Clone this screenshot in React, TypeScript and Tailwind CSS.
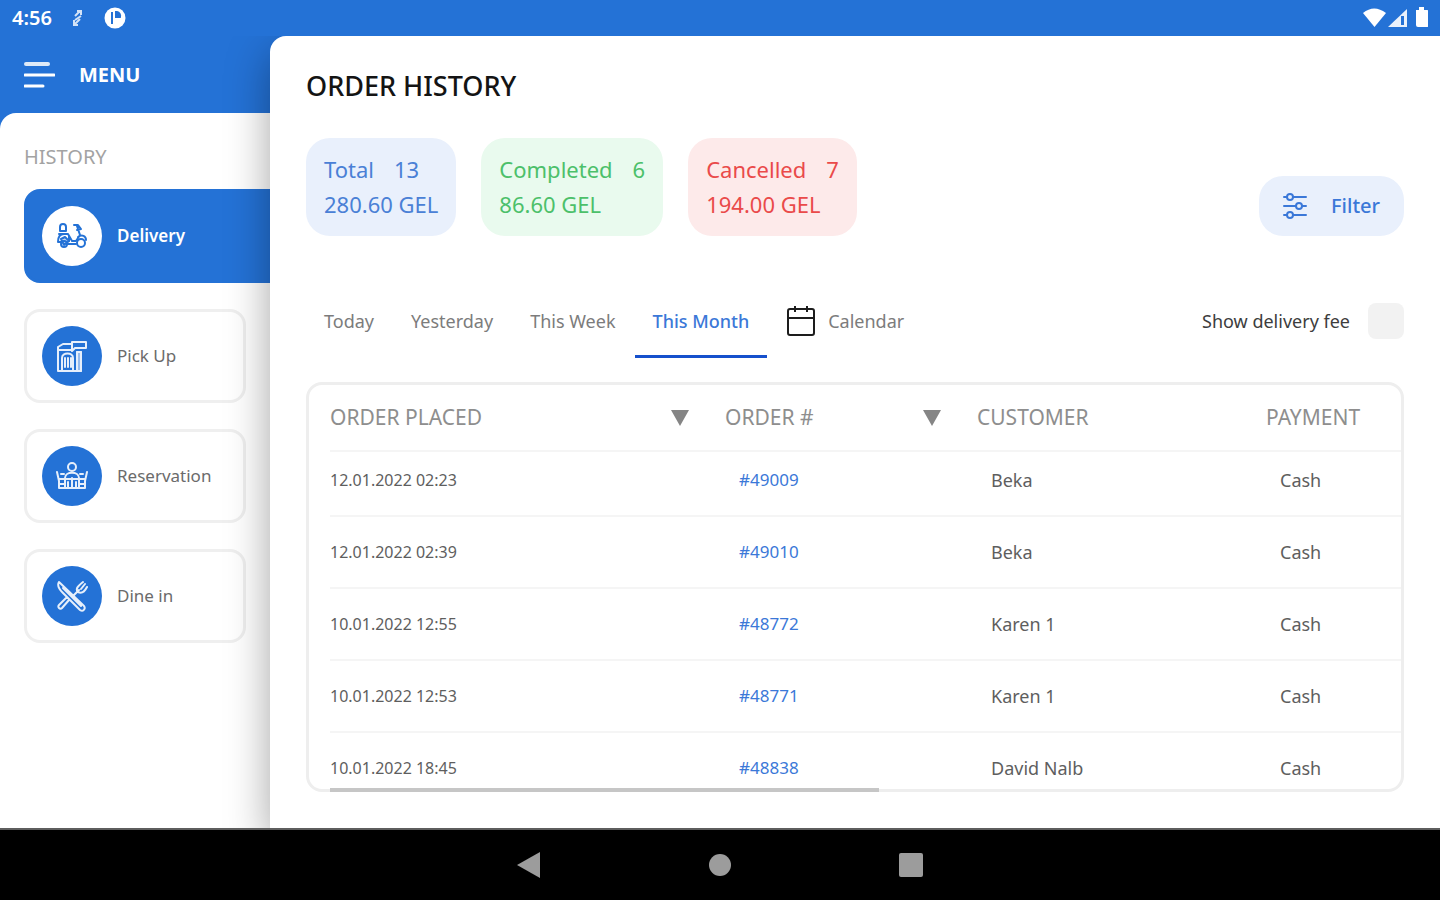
import { useState } from 'react';
import type { ReactNode } from 'react';
import clsx from 'clsx';

const orders = [
  { placed: '12.01.2022 02:23', id: '#49009', customer: 'Beka', payment: 'Cash' },
  { placed: '12.01.2022 02:39', id: '#49010', customer: 'Beka', payment: 'Cash' },
  { placed: '10.01.2022 12:55', id: '#48772', customer: 'Karen 1', payment: 'Cash' },
  { placed: '10.01.2022 12:53', id: '#48771', customer: 'Karen 1', payment: 'Cash' },
  { placed: '10.01.2022 18:45', id: '#48838', customer: 'David Nalb', payment: 'Cash' }
];

const totals = [
  { label: 'Total', count: 13, sum: '280.60 GEL', style: 'bg-[#e9f0fc] text-[#4a80d6]' },
  { label: 'Completed', count: 6, sum: '86.60 GEL', style: 'bg-[#e9faee] text-[#4cc06a]' },
  { label: 'Cancelled', count: 7, sum: '194.00 GEL', style: 'bg-[#fdeaea] text-[#ea4a4a]' }
];

const periods = ['Today', 'Yesterday', 'This Week', 'This Month'];

function Icon({ children }: { children: ReactNode }) {
  return (
    <svg width="32" height="32" viewBox="0 0 32 32" fill="none" stroke="currentColor" strokeWidth="2" strokeLinecap="round" strokeLinejoin="round" aria-hidden="true">
      {children}
    </svg>
  );
}

const sections = [
  {
    name: 'Delivery',
    icon: (
      <Icon>
        <path d="M4 11V7q0-3 3-3t3 3v4zM3 14h9l4 7h4l4-6-3-9M18 5h4l3 4-4 1M2 22c0-5 2-8 6-8M2 22h3M11 24h9M13 16v5M22 17c4-3 8-1 8 3" />
        <path d="M5 19l4-2 4 4-5 4z" fill="currentColor" fillOpacity="0.3" />
        <circle cx="8" cy="24" r="3" />
        <circle cx="25" cy="23" r="4" />
      </Icon>
    )
  },
  {
    name: 'Pick Up',
    icon: (
      <Icon>
        <path d="M2 7v24h23V12M2 7l5-3h9M2 10h14M16 2h14v6H19l-3 3zM6 31V18c0-6 11-6 11 0v13M9 18v9M12 18v9M15 18v9M21 12v19" />
        <path d="M21 12h4v19h-4z" fill="currentColor" fillOpacity="0.6" />
      </Icon>
    )
  },
  {
    name: 'Reservation',
    icon: (
      <Icon>
        <circle cx="16" cy="7" r="4" />
        <path d="M9 18c0-7 14-7 14 0v10H9zM1 12l2 9v7h26v-7l2-9M3 19h26M3 24h6M23 24h6M16 18v10M12 22v6M20 22v6M5 14h3M24 14h3" />
      </Icon>
    )
  },
  {
    name: 'Dine in',
    icon: (
      <Icon>
        <path d="M3 2c-2 3 0 7 4 11l17 17c3 2 6-1 4-4L3 2zM7 8l18 18M18 15l5-5M13 20L6 28c-2 2-5-1-3-3l8-8M22 12c-3-3 0-6 5-10M22 12c4 2 7-1 9-5M25 9l4-5" />
      </Icon>
    )
  }
];

function StatusBar() {
  return (
    <header className="relative z-10 flex h-9 shrink-0 items-center justify-between bg-[#2472d6] px-3 text-white">
      <div className="flex items-center gap-5">
        <span className="text-xl font-semibold">4:56</span>
        <svg width="12" height="18" viewBox="0 0 12 18" fill="none" stroke="currentColor" strokeWidth="2" aria-hidden="true">
          <path d="M3 7l5-5M5 2h4v4M9 7L3 11M8 10l-5 5M2 11v5h4" opacity="0.8" />
        </svg>
        <svg width="22" height="22" viewBox="0 0 22 22" aria-hidden="true">
          <circle cx="11" cy="11" r="10.5" fill="currentColor" />
          <path d="M8 17V5M12 5v5h4a4 4 0 0 0-3-5z" fill="#2472d6" stroke="#2472d6" strokeWidth="2" />
        </svg>
      </div>
      <svg width="66" height="22" viewBox="0 0 66 22" fill="currentColor" aria-hidden="true">
        <path d="M1 6Q12 -3 24 6L12.500 20z" />
        <path d="M26 20L45 2v18z" opacity="0.9" />
        <path d="M39 9h3v9h-3z" fill="#2472d6" />
        <path d="M54 3h3V0h5v3h3a2 2 0 0 1 2 2v13a2 2 0 0 1-2 2H56a2 2 0 0 1-2-2z" />
      </svg>
    </header>
  );
}

function Sidebar() {
  const [active, setActive] = useState('Delivery');

  return (
    <aside className="flex w-[270px] shrink-0 flex-col">
      <div className="flex h-[77px] shrink-0 items-center px-6">
        <button className="flex items-center gap-6 text-xl font-bold text-white">
          <svg width="31" height="28" viewBox="0 0 31 28" stroke="currentColor" strokeLinecap="round" aria-hidden="true">
            <path d="M2 3h22" strokeWidth="4" opacity="0.85" />
            <path d="M1 14h29M1 25h18" strokeWidth="3" />
          </svg>
          MENU
        </button>
      </div>
      <nav className="flex-1 rounded-tl-2xl bg-white px-6 pt-[30px]">
        <h2 className="text-xl text-[#a3a3a3]">HISTORY</h2>
        <ul className="mt-[18px] flex flex-col gap-[26px]">
          {sections.map(({ name, icon }) => (
            <li key={name} className={clsx(active === name && '-mr-6')}>
              <button
                onClick={() => setActive(name)}
                className={clsx(
                  'flex h-[94px] w-full items-center gap-[15px] border-3 px-[15px] text-[17px]',
                  active === name ? 'rounded-l-2xl border-[#2472d6] bg-[#2472d6] font-semibold text-white' : 'rounded-2xl border-[#efefef] text-[#6b6b6b]'
                )}
              >
                <span className={clsx('flex size-[60px] shrink-0 items-center justify-center rounded-full', active === name ? 'bg-white text-[#2472d6]' : 'bg-[#2472d6] text-[#e6effb]')}>{icon}</span>
                {name}
              </button>
            </li>
          ))}
        </ul>
      </nav>
    </aside>
  );
}

function SortArrow() {
  return (
    <svg width="18" height="16" viewBox="0 0 18 16" fill="#858585" aria-hidden="true">
      <path d="M0 0h18L9 16z" />
    </svg>
  );
}

function OrdersTable() {
  return (
    <div className="relative mt-6 min-h-0 flex-1">
      <div className="h-full overflow-hidden rounded-2xl border-3 border-[#eeeeee] pl-[21px]">
        <table className="w-full table-fixed text-left">
          <thead>
            <tr className="h-[66px] border-b-2 border-[#f5f5f5] text-[21px] text-[#8e8e8e]">
              <th className="w-[395px] pr-9 font-normal">
                <button className="flex w-full items-center justify-between">ORDER PLACED <SortArrow /></button>
              </th>
              <th className="w-[252px] pr-9 font-normal">
                <button className="flex w-full items-center justify-between">ORDER # <SortArrow /></button>
              </th>
              <th className="w-[289px] font-normal">CUSTOMER</th>
              <th className="font-normal">PAYMENT</th>
            </tr>
          </thead>
          <tbody>
            {orders.map((order, i) => (
              <tr key={order.id} className={clsx('border-b-2 border-[#f5f5f5] text-lg leading-6 text-[#5e5e5e]', i === 0 ? 'h-[65px] [&>td]:pb-2' : 'h-[72px]')}>
                <td className="text-base">{order.placed}</td>
                <td className="pl-[14px] text-[17px]"><a href={order.id} className="text-[#3b78d8]">{order.id}</a></td>
                <td className="pl-[14px]">{order.customer}</td>
                <td className="pl-[14px]">{order.payment}</td>
              </tr>
            ))}
          </tbody>
        </table>
      </div>
      <div className="absolute bottom-0 left-6 h-1 w-1/2 bg-[#c6c6c6]" />
    </div>
  );
}

function OrderHistory() {
  const [period, setPeriod] = useState('This Month');

  return (
    <main className="flex min-w-0 flex-1 flex-col rounded-tl-2xl bg-white px-9 pt-7 pb-9 shadow-[0_16px_44px_rgba(0,0,0,0.36)]">
      <h1 className="text-[27px] leading-11 font-medium text-[#141414]">ORDER HISTORY</h1>

      <div className="mt-[30px] flex items-end justify-between">
        <div className="flex gap-[25px]">
          {totals.map((item) => (
            <div key={item.label} className={clsx('rounded-3xl px-[18px] py-[14px] text-[22px] leading-[35px]', item.style)}>
              <p className="flex gap-5"><span>{item.label}</span><span>{item.count}</span></p>
              <p>{item.sum}</p>
            </div>
          ))}
        </div>
        <button className="flex h-[60px] items-center gap-6 rounded-3xl bg-[#e9f0fc] px-6 text-xl font-medium text-[#3b78d8]">
          <svg width="24" height="26" viewBox="0 0 24 26" fill="none" stroke="currentColor" strokeWidth="2" strokeLinecap="round" aria-hidden="true">
            <path d="M1 4h3M10 4h13M1 13h12M19 13h4M1 22h3M10 22h13" />
            <circle cx="7" cy="4" r="3" />
            <circle cx="16" cy="13" r="3" />
            <circle cx="7" cy="22" r="3" />
          </svg>
          Filter
        </button>
      </div>

      <div className="mt-[50px] flex items-start justify-between">
        <div className="flex gap-px text-lg text-[#7c7c7c]">
          {periods.map((name) => (
            <button
              key={name}
              onClick={() => setPeriod(name)}
              className={clsx('h-[72px] border-b-3 px-[18px]', period === name ? 'border-[#1650cc] font-medium text-[#3b78d8]' : 'border-transparent')}
            >
              {name}
            </button>
          ))}
          <button className="flex h-[72px] items-center gap-3 border-b-3 border-transparent px-[18px]">
            <svg width="30" height="32" viewBox="0 0 30 32" fill="none" stroke="#1d1d1d" strokeWidth="2" aria-hidden="true">
              <rect x="2" y="4" width="26" height="26" rx="2" />
              <path d="M2 13h26M9 1v6M21 1v6" />
            </svg>
            Calendar
          </button>
        </div>
        <label className="flex h-[72px] items-center gap-[18px] border-b-3 border-transparent text-lg text-[#3d3d3d]">
          Show delivery fee
          <input type="checkbox" className="size-9 appearance-none rounded-lg bg-[#f2f2f2] checked:bg-[#2472d6]" />
        </label>
      </div>

      <OrdersTable />
    </main>
  );
}

function NavigationBar() {
  return (
    <footer className="relative flex h-[72px] shrink-0 items-center justify-center gap-[168px] border-t-2 border-[#5e5e5e] bg-black text-[#9c9c9c]">
      <button aria-label="Back">
        <svg width="24" height="26" viewBox="0 0 24 26" fill="currentColor"><path d="M23 0v26L0 13z" /></svg>
      </button>
      <button aria-label="Home" className="size-[22px] rounded-full bg-current" />
      <button aria-label="Recent apps" className="size-6 rounded-xs bg-current" />
    </footer>
  );
}

export default function App() {
  return (
    <div className="flex h-screen flex-col overflow-hidden bg-[#2472d6] font-['Noto_Sans',sans-serif]">
      <StatusBar />
      <div className="flex min-h-0 flex-1">
        <Sidebar />
        <OrderHistory />
      </div>
      <NavigationBar />
    </div>
  );
}
